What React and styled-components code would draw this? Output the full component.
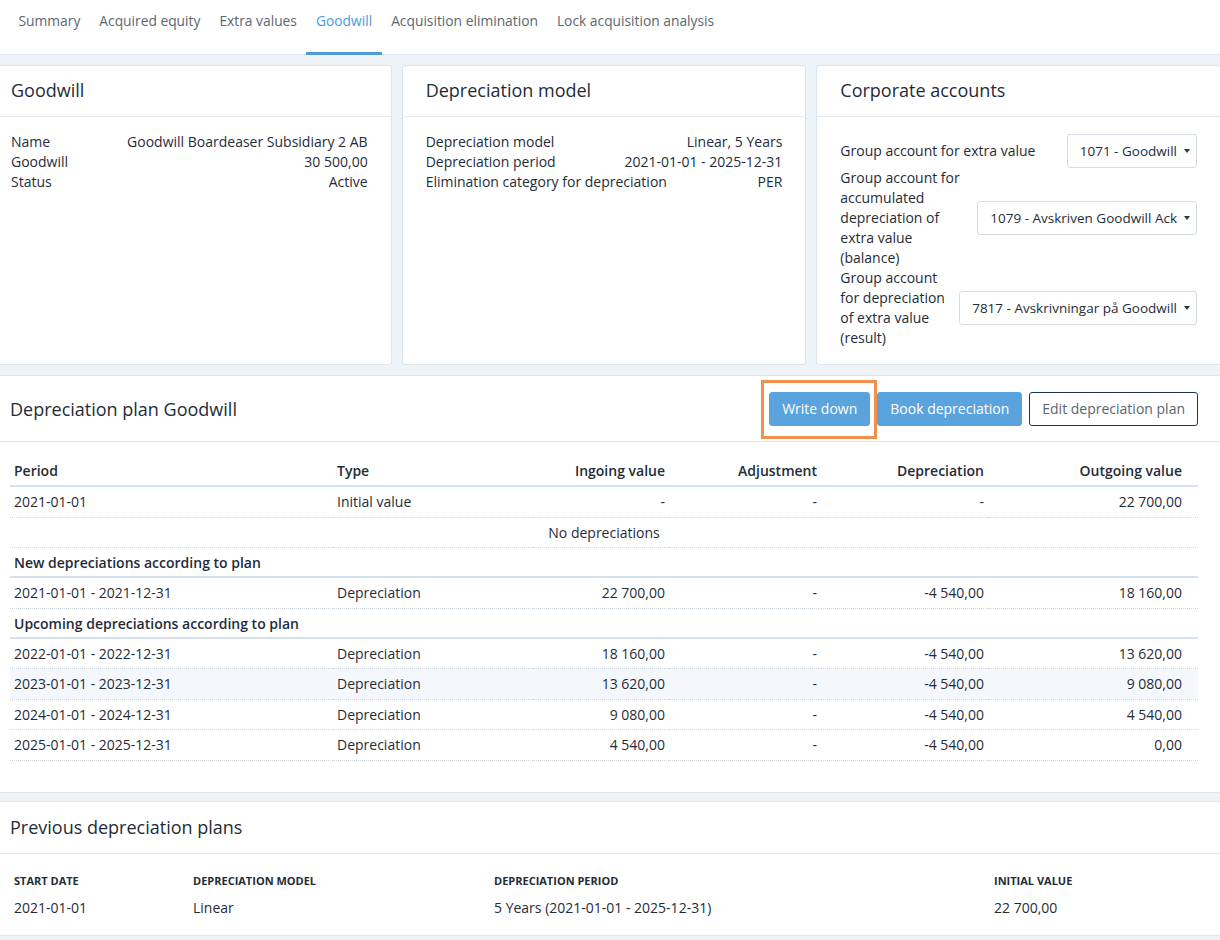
import React from "react";
import styled, { createGlobalStyle } from "styled-components";

const GlobalStyle = createGlobalStyle`
    html, body {
        margin: 0;
        padding: 0;
        background: #eef3f8;
        overflow-x: hidden;
    }
    body {
        font-family: "Open Sans", "Noto Sans", Arial, sans-serif;
        font-size: 14px;
        color: #1f2c38;
    }
`;

const Page = styled.div`
    width: 1220px;
    min-height: 940px;
    overflow: hidden;
`;

// tabs
const TabBar = styled.nav`
    height: 55px;
    background: #fff;
    border-bottom: 1px solid #dde5ee;
    display: flex;
    align-items: stretch;
    padding-left: 9px;
    box-sizing: border-box;
`;

const Tab = styled.div`
    padding: 12px 9.5px 0;
    font-size: 13.8px;
    color: ${(p) => (p.$active ? "#4c9bd8" : "#5b6773")};
    border-bottom: 3px solid ${(p) => (p.$active ? "#4c9bd8" : "transparent")};
    line-height: 18px;
    box-sizing: border-box;
    height: 55px;
    margin-bottom: -1px;
`;

// cards
const CardRow = styled.div`
    display: grid;
    grid-template-columns: repeat(3, 1fr);
    gap: 10px;
    margin: 10px -1px 10px -13px;
`;

const Card = styled.section`
    background: #fff;
    border: 1px solid #dbe3ec;
    border-radius: 3px;
    height: 300px;
    box-sizing: border-box;
    display: flex;
    flex-direction: column;
`;

const CardHead = styled.h2`
    margin: 0;
    font-size: 18px;
    font-weight: 500;
    padding: 0 23px;
    height: 51px;
    line-height: 49px;
    border-bottom: 1px solid #e1e7ee;
    box-sizing: border-box;
`;

const CardBody = styled.div`
    padding: ${(p) => p.$pt || 15}px 23px 15px;
`;

const InfoRow = styled.div`
    display: flex;
    justify-content: space-between;
    line-height: 20px;
`;

const AccountRow = styled.div`
    display: flex;
    align-items: center;
    gap: 12px;
    line-height: 20px;
`;

const AccountLabel = styled.div`
    flex: 1;
`;

const Select = styled.div`
    flex-shrink: 0;
    height: 34px;
    border: 1px solid #d3dbe4;
    border-radius: 3px;
    box-sizing: border-box;
    display: flex;
    align-items: center;
    gap: 7px;
    padding: 0 6px 0 12px;
    font-size: 13.5px;
    background: #fff;
    white-space: nowrap;
`;

const Caret = styled.span`
    width: 0;
    height: 0;
    border-left: 3.5px solid transparent;
    border-right: 3.5px solid transparent;
    border-top: 4px solid #2a3744;
`;

// sections
const Section = styled.section`
    background: #fff;
    border-top: 1px solid #dde5ee;
    border-bottom: 1px solid #dde5ee;
    margin-bottom: 8px;
    padding-bottom: ${(p) => p.$pb || 0}px;
`;

const SectionHead = styled.div`
    display: flex;
    align-items: center;
    justify-content: space-between;
    padding: 0 22px 0 10px;
    height: ${(p) => p.$h || 65}px;
    border-bottom: 1px solid #dde5ee;
`;

const SectionTitle = styled.h2`
    margin: 0;
    font-size: 18px;
    font-weight: 500;
`;

const Actions = styled.div`
    display: flex;
    gap: 7px;
`;

const Button = styled.button`
    font-family: inherit;
    font-size: 14px;
    height: 34px;
    padding: 0 12px;
    border-radius: 3px;
    cursor: pointer;
    background: ${(p) => (p.$outline ? "#fff" : "#5aa3dc")};
    color: ${(p) => (p.$outline ? "#5b6570" : "#fff")};
    border: 1px solid ${(p) => (p.$outline ? "#1d3550" : "#5aa3dc")};
`;

const Highlight = styled.span`
    position: relative;
    display: inline-flex;
    &::after {
        content: "";
        position: absolute;
        top: -12px;
        bottom: -13px;
        left: -8px;
        right: -7px;
        border: 3px solid #f0904a;
        pointer-events: none;
    }
`;

const TableWrap = styled.div`
    padding: 14px 22px 0 10px;
`;

const Table = styled.table`
    width: 100%;
    border-collapse: collapse;
    table-layout: fixed;
`;

const Th = styled.th`
    font-weight: 600;
    text-align: ${(p) => p.$align || "left"};
    padding: 6px 4px 5px;
    padding-right: ${(p) => (p.$last ? 16 : 4)}px;
    line-height: 18px;
    border-bottom: 2px solid #d7e1eb;
`;

const Tr = styled.tr`
    background: ${(p) => (p.$striped ? "#f4f8fc" : "transparent")};
`;

const Td = styled.td`
    text-align: ${(p) => p.$align || "left"};
    padding: 6px 4px;
    padding-right: ${(p) => (p.$last ? 16 : 4)}px;
    line-height: 17.5px;
    border-bottom: 1px dotted #cfd6dd;
    white-space: nowrap;
`;

const GroupTd = styled.td`
    font-weight: 600;
    padding: 6px 4px 4px;
    line-height: 18px;
    border-bottom: 2px solid #d7e1eb;
`;

const PrevTable = styled.div`
    padding: 18px 10px 0 14px;
    display: grid;
    grid-template-columns: 179px 301px 500px 1fr;
    row-gap: 8px;
`;

const PrevHead = styled.div`
    font-size: 11px;
    font-weight: 700;
    text-transform: uppercase;
    line-height: 18px;
`;

const PrevCell = styled.div`
    line-height: 20px;
    padding-bottom: 17px;
`;

const planRows = [
    ["2022-01-01 - 2022-12-31", "18 160,00", "13 620,00"],
    ["2023-01-01 - 2023-12-31", "13 620,00", "9 080,00"],
    ["2024-01-01 - 2024-12-31", "9 080,00", "4 540,00"],
    ["2025-01-01 - 2025-12-31", "4 540,00", "0,00"],
];

const tabs = ["Summary", "Acquired equity", "Extra values", "Goodwill", "Acquisition elimination", "Lock acquisition analysis"];

const App = () => {
    return (
        <Page>
            <GlobalStyle />
            <TabBar>
                {tabs.map((t) => (
                    <Tab key={t} $active={t === "Goodwill"}>
                        {t}
                    </Tab>
                ))}
            </TabBar>

            <CardRow>
                <Card>
                    <CardHead>Goodwill</CardHead>
                    <CardBody>
                        <InfoRow>
                            <span>Name</span>
                            <span>Goodwill Boardeaser Subsidiary 2 AB</span>
                        </InfoRow>
                        <InfoRow>
                            <span>Goodwill</span>
                            <span>30 500,00</span>
                        </InfoRow>
                        <InfoRow>
                            <span>Status</span>
                            <span>Active</span>
                        </InfoRow>
                    </CardBody>
                </Card>
                <Card>
                    <CardHead>Depreciation model</CardHead>
                    <CardBody>
                        <InfoRow>
                            <span>Depreciation model</span>
                            <span>Linear, 5 Years</span>
                        </InfoRow>
                        <InfoRow>
                            <span>Depreciation period</span>
                            <span>2021-01-01 - 2025-12-31</span>
                        </InfoRow>
                        <InfoRow>
                            <span>Elimination category for depreciation</span>
                            <span>PER</span>
                        </InfoRow>
                    </CardBody>
                </Card>
                <Card>
                    <CardHead>Corporate accounts</CardHead>
                    <CardBody $pt={17}>
                        <AccountRow>
                            <AccountLabel>Group account for extra value</AccountLabel>
                            <Select>
                                1071 - Goodwill <Caret />
                            </Select>
                        </AccountRow>
                        <AccountRow>
                            <AccountLabel>Group account for accumulated depreciation of extra value (balance)</AccountLabel>
                            <Select>
                                1079 - Avskriven Goodwill Ack <Caret />
                            </Select>
                        </AccountRow>
                        <AccountRow>
                            <AccountLabel>Group account for depreciation of extra value (result)</AccountLabel>
                            <Select>
                                7817 - Avskrivningar på Goodwill <Caret />
                            </Select>
                        </AccountRow>
                    </CardBody>
                </Card>
            </CardRow>

            {/* depreciation plan */}
            <Section $pb={31}>
                <SectionHead>
                    <SectionTitle>Depreciation plan Goodwill</SectionTitle>
                    <Actions>
                        <Highlight>
                            <Button>Write down</Button>
                        </Highlight>
                        <Button>Book depreciation</Button>
                        <Button $outline>Edit depreciation plan</Button>
                    </Actions>
                </SectionHead>
                <TableWrap>
                    <Table>
                        <colgroup>
                            <col style={{ width: 323 }} />
                            <col style={{ width: 200 }} />
                            <col style={{ width: 136 }} />
                            <col style={{ width: 152 }} />
                            <col style={{ width: 167 }} />
                            <col />
                        </colgroup>
                        <thead>
                            <tr>
                                <Th>Period</Th>
                                <Th>Type</Th>
                                <Th $align="right">Ingoing value</Th>
                                <Th $align="right">Adjustment</Th>
                                <Th $align="right">Depreciation</Th>
                                <Th $align="right" $last>
                                    Outgoing value
                                </Th>
                            </tr>
                        </thead>
                        <tbody>
                            <Tr>
                                <Td>2021-01-01</Td>
                                <Td>Initial value</Td>
                                <Td $align="right">-</Td>
                                <Td $align="right">-</Td>
                                <Td $align="right">-</Td>
                                <Td $align="right" $last>
                                    22 700,00
                                </Td>
                            </Tr>
                            <Tr>
                                <Td colSpan={6} $align="center">
                                    No depreciations
                                </Td>
                            </Tr>
                            <tr>
                                <GroupTd colSpan={6}>New depreciations according to plan</GroupTd>
                            </tr>
                            <Tr>
                                <Td>2021-01-01 - 2021-12-31</Td>
                                <Td>Depreciation</Td>
                                <Td $align="right">22 700,00</Td>
                                <Td $align="right">-</Td>
                                <Td $align="right">-4 540,00</Td>
                                <Td $align="right" $last>
                                    18 160,00
                                </Td>
                            </Tr>
                            <tr>
                                <GroupTd colSpan={6}>Upcoming depreciations according to plan</GroupTd>
                            </tr>
                            {planRows.map((r, i) => (
                                <Tr key={r[0]} $striped={i === 1}>
                                    <Td>{r[0]}</Td>
                                    <Td>Depreciation</Td>
                                    <Td $align="right">{r[1]}</Td>
                                    <Td $align="right">-</Td>
                                    <Td $align="right">-4 540,00</Td>
                                    <Td $align="right" $last>
                                        {r[2]}
                                    </Td>
                                </Tr>
                            ))}
                        </tbody>
                    </Table>
                </TableWrap>
            </Section>

            {/* previous plans */}
            <Section>
                <SectionHead $h={51}>
                    <SectionTitle>Previous depreciation plans</SectionTitle>
                </SectionHead>
                <PrevTable>
                    <PrevHead>Start date</PrevHead>
                    <PrevHead>Depreciation model</PrevHead>
                    <PrevHead>Depreciation period</PrevHead>
                    <PrevHead>Initial value</PrevHead>
                    <PrevCell>2021-01-01</PrevCell>
                    <PrevCell>Linear</PrevCell>
                    <PrevCell>5 Years (2021-01-01 - 2025-12-31)</PrevCell>
                    <PrevCell>22 700,00</PrevCell>
                </PrevTable>
            </Section>
        </Page>
    );
};

export default App;
